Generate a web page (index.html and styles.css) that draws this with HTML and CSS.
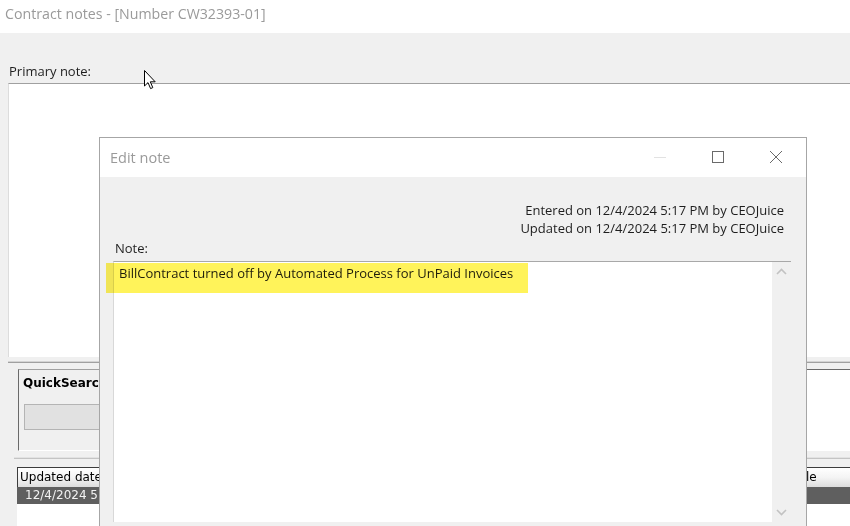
FILE: index.html
```html
<!DOCTYPE html>
<html>
<head>
  <meta charset="utf-8">
  <title>Contract notes</title>
  <link rel="stylesheet" href="styles.css">
</head>
<body>
  <div class="window">
    <div class="titlebar">Contract notes - [Number CW32393-01]</div>

    <div class="client">
      <div class="primary-label">Primary note:</div>
      <div class="primary-box"></div>

      <div class="splitter"></div>

      <div class="search-row">
        <div class="group">
          <div class="group-title">QuickSearch</div>
          <div class="search-input"></div>
        </div>
        <div class="search-side"></div>
      </div>

      <div class="splitter lower"></div>

      <div class="grid">
        <div class="grid-head">
          <div class="head-cell date">Updated date</div>
          <div class="head-cell note">Note</div>
          <div class="head-cell title">Title</div>
        </div>
        <div class="grid-row selected">
          <div class="cell date">12/4/2024 5:17 PM</div>
          <div class="cell note">BillContract turned off by Automated Process for UnPaid Invoices</div>
        </div>
      </div>
    </div>

    <!-- cursor -->
    <svg class="cursor" width="13" height="20" viewBox="0 0 13 20">
      <path d="M0.5 0.5 L0.5 16 L4 12.6 L6.6 18.6 L8.8 17.6 L6.3 11.8 L11.2 11.8 Z" fill="#fff" stroke="#000" stroke-width="1" stroke-linejoin="miter"/>
    </svg>

    <div class="dialog">
      <div class="dlg-titlebar">
        <span class="dlg-title">Edit note</span>
        <div class="dlg-controls">
          <svg class="ctl" width="46" height="30" viewBox="0 0 46 30">
            <line x1="17" y1="15.5" x2="29" y2="15.5" stroke="#e2e2e2" stroke-width="1"/>
          </svg>
          <svg class="ctl" width="46" height="30" viewBox="0 0 46 30">
            <rect x="17.5" y="9.5" width="11" height="11" fill="none" stroke="#6a6a6a" stroke-width="1"/>
          </svg>
          <svg class="ctl" width="46" height="30" viewBox="0 0 46 30">
            <path d="M17 9 L29 21 M29 9 L17 21" stroke="#6a6a6a" stroke-width="1"/>
          </svg>
        </div>
      </div>

      <div class="dlg-body">
        <div class="stamp">
          <div>Entered on 12/4/2024 5:17 PM by CEOJuice</div>
          <div>Updated on 12/4/2024 5:17 PM by CEOJuice</div>
        </div>
        <div class="note-label">Note:</div>
        <div class="note-box">
          <div class="note-text">BillContract turned off by Automated Process for UnPaid Invoices</div>
          <div class="scrollbar">
            <svg width="19" height="19" viewBox="0 0 19 19">
              <path d="M5 12 L9.5 7.5 L14 12" fill="none" stroke="#c2c2c2" stroke-width="1.6"/>
            </svg>
            <svg width="19" height="19" viewBox="0 0 19 19">
              <path d="M5 7 L9.5 11.5 L14 7" fill="none" stroke="#c2c2c2" stroke-width="1.6"/>
            </svg>
          </div>
        </div>
      </div>

      <div class="highlight"></div>
    </div>
  </div>
</body>
</html>
```

FILE: styles.css
```css
:root {
  --face: #f0f0f0;
  --border: #a0a0a0;
  --border-light: #dcdcdc;
  --text: #1e1e1e;
  --text-muted: #9a9a9a;
  --ui-font: 'Open Sans', 'Noto Sans', sans-serif;
  --grid-font: 'DejaVu Sans', Verdana, sans-serif;
}

* {
  margin: 0;
  padding: 0;
  box-sizing: border-box;
}

body {
  width: 850px;
  height: 526px;
  overflow: hidden;
  background: #fff;
  font-family: var(--ui-font);
  font-size: 13px;
  color: var(--text);
}

.window {
  position: relative;
  height: 526px;
  display: flex;
  flex-direction: column;
}

.titlebar {
  height: 33px;
  padding: 4px 0 0 5px;
  font-size: 14.2px;
  line-height: 20px;
  color: var(--text-muted);
  background: #fff;
}

.client {
  flex: 1;
  background: var(--face);
  display: flex;
  flex-direction: column;
}

.primary-label {
  padding: 30px 0 0 9px;
  line-height: 16px;
}

.primary-box {
  margin: 4px 0 0 8px;
  height: 274px;
  background: #fff;
  border-top: 1px solid var(--border);
  border-left: 1px solid var(--border-light);
}

.splitter {
  margin: 4px 0 0 8px;
  border-top: 1px solid #d4d4d4;
  border-bottom: 1px solid var(--border);
}

.splitter.lower {
  margin: 6px 0 0 14px;
  border-top: 1px solid #e2e2e2;
  border-bottom: 1px solid #c4c4c4;
}

.search-row {
  margin: 6px 0 0 18px;
  height: 82px;
  display: flex;
}

.group {
  width: 520px;
  border-top: 1px solid var(--border);
  border-left: 1px solid #6a6a6a;
  border-bottom: 1px solid #fff;
  padding: 6px 0 0 4px;
  background: var(--face);
}

.group-title {
  font-family: var(--grid-font);
  font-weight: bold;
  font-size: 12px;
  line-height: 14px;
  color: #000;
}

.search-input {
  margin: 14px 0 0 1px;
  width: 480px;
  height: 26px;
  background: #e1e1e1;
  border: 1px solid #b4b4b4;
}

.search-side {
  flex: 1;
  background: #fff;
  border-top: 1px solid #6a6a6a;
}

.grid {
  margin: 8px 0 0 17px;
  flex: 1;
  background: #fff;
  font-family: var(--grid-font);
  font-size: 12px;
}

.grid-head {
  height: 20px;
  display: flex;
  border-top: 1px solid #3c3c3c;
  border-left: 1px solid #3c3c3c;
  background: linear-gradient(#ffffff, #f4f4f4 50%, #dcdcdc);
}

.head-cell {
  padding: 1px 0 0 2px;
  line-height: 17px;
  color: #000;
  border-right: 1px solid #a8a8a8;
  white-space: nowrap;
}

.head-cell.date,
.cell.date {
  width: 130px;
}

.head-cell.note,
.cell.note {
  width: 643px;
}

.head-cell.title {
  flex: 1;
  padding-left: 0;
  border-right: none;
}

.grid-row {
  height: 17px;
  display: flex;
  line-height: 17px;
}

.grid-row.selected {
  background: #5f5f5f;
  color: #f2f2f2;
}

.cell {
  padding-left: 8px;
  white-space: nowrap;
  overflow: hidden;
}

.cursor {
  position: absolute;
  left: 144px;
  top: 70px;
}

/* Edit note dialog */
.dialog {
  position: absolute;
  left: 99px;
  top: 137px;
  width: 708px;
  height: 400px;
  border: 1px solid #a6a6a6;
  background: var(--face);
}

.dlg-titlebar {
  height: 39px;
  background: #fff;
  display: flex;
  align-items: center;
  justify-content: space-between;
}

.dlg-title {
  padding-left: 10px;
  font-size: 14.5px;
  color: var(--text-muted);
}

.dlg-controls {
  display: flex;
  margin-right: 7px;
  margin-top: -1px;
}

.ctl {
  margin-left: 12px;
}

.dlg-body {
  padding: 24px 0 0 0;
}

.stamp {
  text-align: right;
  padding-right: 22px;
  line-height: 18px;
}

.note-label {
  margin-top: 3px;
  padding-left: 15px;
  line-height: 16px;
}

.note-box {
  margin: 5px 15px 0 13px;
  height: 261px;
  display: flex;
  background: #fff;
  border-top: 1px solid #a8a8a8;
  border-left: 1px solid #d8d8d8;
}

.note-text {
  flex: 1;
  padding: 3px 0 0 5px;
  line-height: 16px;
}

.scrollbar {
  width: 19px;
  background: var(--face);
  display: flex;
  flex-direction: column;
  justify-content: space-between;
}

.highlight {
  position: absolute;
  left: 6px;
  top: 125px;
  width: 422px;
  height: 30px;
  background: #fff35a;
  mix-blend-mode: multiply;
}
```
